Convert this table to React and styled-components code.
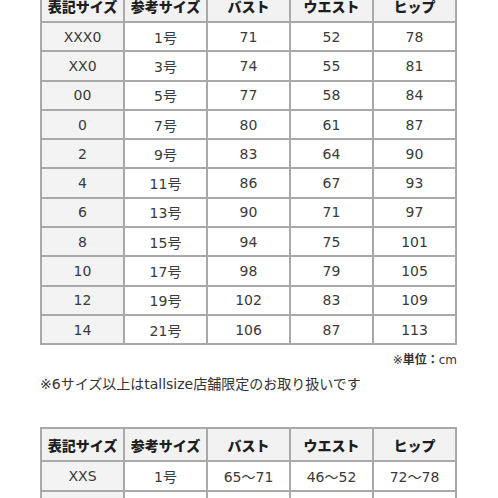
import React from "react";
import styled, { createGlobalStyle } from "styled-components";

const GlobalStyle = createGlobalStyle`
  body {
    margin: 0;
    background: #fff;
    font-family: "DejaVu Sans", "Noto Sans CJK JP", sans-serif;
    color: #333;
  }
`;

const headers = ["表記サイズ", "参考サイズ", "バスト", "ウエスト", "ヒップ"];

const sizes = [
  ["XXX0", "1号", "71", "52", "78"],
  ["XX0", "3号", "74", "55", "81"],
  ["00", "5号", "77", "58", "84"],
  ["0", "7号", "80", "61", "87"],
  ["2", "9号", "83", "64", "90"],
  ["4", "11号", "86", "67", "93"],
  ["6", "13号", "90", "71", "97"],
  ["8", "15号", "94", "75", "101"],
  ["10", "17号", "98", "79", "105"],
  ["12", "19号", "102", "83", "109"],
  ["14", "21号", "106", "87", "113"],
];

const letterSizes = [
  ["XXS", "1号", "65〜71", "46〜52", "72〜78"],
  ["XS", "3号", "68〜74", "49〜55", "75〜81"],
];

const SizeChart = ({ rows }) => (
  <Table>
    <thead>
      <tr>
        {headers.map((h) => (
          <HeadCell key={h}>{h}</HeadCell>
        ))}
      </tr>
    </thead>
    <tbody>
      {rows.map((row) => (
        <tr key={row[0]}>
          {row.map((value, i) => (
            <Cell key={i} $label={i === 0}>
              {value}
            </Cell>
          ))}
        </tr>
      ))}
    </tbody>
  </Table>
);

const App = () => {
  return (
    <>
      <GlobalStyle />
      <Page>
        <SizeChart rows={sizes} />
        <UnitNote>
          ※<b>単位：</b>cm
        </UnitNote>
        <Note>※6サイズ以上はtallsize店舗限定のお取り扱いです</Note>
        <SecondChart>
          <SizeChart rows={letterSizes} />
        </SecondChart>
      </Page>
    </>
  );
};

const Page = styled.div`
  margin-top: -12px;
  padding-left: 40px;
  width: 417px;
`;

const Table = styled.table`
  width: 417px;
  border-collapse: collapse;
  table-layout: fixed;
  border: 2px solid #a9a9a9;
`;

const HeadCell = styled.th`
  width: 20%;
  height: 31px;
  padding: 0;
  border: 2px solid #a9a9a9;
  background: #f2f2f2;
  font-family: "Noto Sans CJK JP", sans-serif;
  font-size: 14px;
  font-weight: 900;
  color: #1e1e1e;
  text-align: center;
`;

const Cell = styled.td`
  height: 27.3px;
  padding: 0;
  border: 2px solid #a9a9a9;
  background: ${(p) => (p.$label ? "#f3f3f3" : "#fff")};
  font-size: 14px;
  color: #3a3a3a;
  text-align: center;
`;

const UnitNote = styled.div`
  margin-top: 5px;
  text-align: right;
  font-size: 12px;
  line-height: 18px;
  color: #333;

  b {
    font-family: "Noto Sans CJK JP", sans-serif;
    font-weight: 700;
  }
`;

const Note = styled.div`
  margin-top: 5px;
  font-size: 14px;
  line-height: 20px;
  color: #333;
  white-space: nowrap;
`;

const SecondChart = styled.div`
  margin-top: 33px;
`;

export default App;
